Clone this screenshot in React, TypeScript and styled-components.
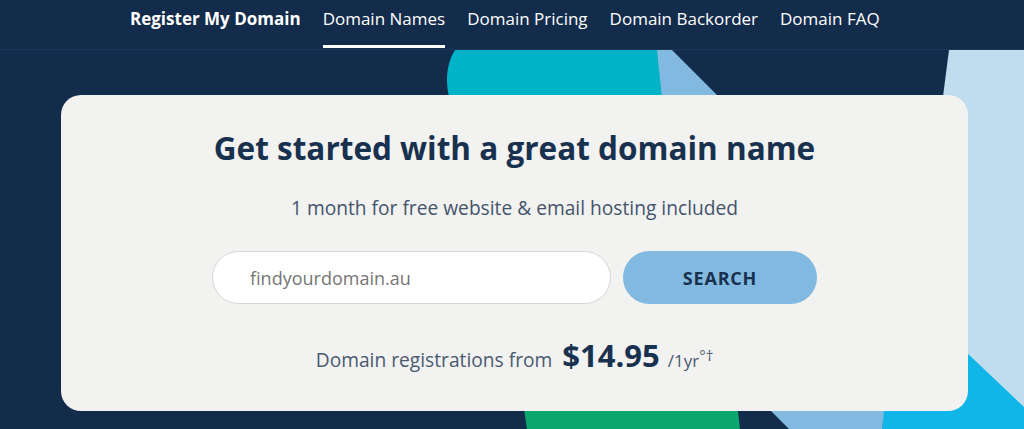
import React from "react";
import styled, { createGlobalStyle } from "styled-components";

const GlobalStyle = createGlobalStyle`
  html, body {
    margin: 0;
    padding: 0;
    background: #132c4b;
    font-family: "Open Sans", "Liberation Sans", sans-serif;
  }
  * { box-sizing: border-box; }
`;

const Page = styled.div`
  width: 1024px;
  height: 429px;
  overflow: hidden;
  background: #132c4b;
`;

const NavBar = styled.nav`
  height: 50px;
  display: flex;
  align-items: stretch;
  gap: 22px;
  padding-left: 130px;
  border-bottom: 1px solid #1c3657;
`;

const NavItem = styled.a<{ $active?: boolean; $bold?: boolean }>`
  display: flex;
  align-items: center;
  padding-bottom: 9px;
  color: #ffffff;
  font-size: 17px;
  font-weight: ${(p) => (p.$bold ? 700 : 400)};
  text-decoration: none;
  white-space: nowrap;
  border-bottom: 3px solid ${(p) => (p.$active ? "#ffffff" : "transparent")};
  margin-bottom: 1px;
`;

const Hero = styled.section`
  position: relative;
  height: 379px;
  padding-top: 45px;
`;

const Shapes = styled.svg`
  position: absolute;
  inset: 0;
  width: 100%;
  height: 100%;
`;

const Card = styled.div`
  position: relative;
  margin-left: 61px;
  width: 907px;
  height: 316px;
  border-radius: 20px;
  background: #f2f2f1;
  display: flex;
  flex-direction: column;
  align-items: center;
  padding-top: 33px;
`;

const Title = styled.h1`
  margin: 0;
  font-size: 31.5px;
  line-height: 40px;
  font-weight: 700;
  color: #18314f;
`;

const Subtitle = styled.p`
  margin: 28px 0 0;
  font-size: 19.2px;
  line-height: 24px;
  color: #44546a;
`;

const SearchRow = styled.form`
  display: flex;
  gap: 12px;
  margin-top: 31px;
`;

const DomainInput = styled.input`
  width: 399px;
  height: 53px;
  border-radius: 27px;
  border: 1px solid #d6d6d6;
  background: #ffffff;
  padding: 0 0 0 37px;
  font-family: inherit;
  font-size: 18px;
  color: #333;
  outline: none;
  &::placeholder { color: #767676; }
`;

const SearchButton = styled.button`
  width: 194px;
  height: 53px;
  border: none;
  border-radius: 27px;
  background: #82b9e0;
  color: #18314f;
  font-family: inherit;
  font-size: 18px;
  font-weight: 700;
  letter-spacing: 0.8px;
  cursor: pointer;
`;

const PriceRow = styled.div`
  display: flex;
  align-items: baseline;
  margin-top: 30px;
  color: #4a5a70;
  font-size: 19.2px;
`;

const Price = styled.span`
  margin: 0 8px 0 10px;
  font-size: 31px;
  font-weight: 700;
  color: #18314f;
`;

const Term = styled.span`
  font-size: 17px;
  sup {
    font-size: 15px;
    line-height: 0;
    vertical-align: 6px;
  }
`;

const navLinks = [
  { label: "Register My Domain", bold: true },
  { label: "Domain Names", active: true },
  { label: "Domain Pricing" },
  { label: "Domain Backorder" },
  { label: "Domain FAQ" },
];

export default function App() {
  return (
    <Page>
      <GlobalStyle />
      <NavBar>
        {navLinks.map((l) => (
          <NavItem key={l.label} href="#" $bold={l.bold} $active={l.active}>
            {l.label}
          </NavItem>
        ))}
      </NavBar>
      <Hero>
        <Shapes viewBox="0 50 1024 379" preserveAspectRatio="none">
          <path d="M455 50 C446 64 445 84 450 100 L470 200 L690 200 L658 50 Z" fill="#00b3c9" />
          <path d="M657 50 L672 50 L740 118 L664 118 Z" fill="#82b9e0" />
          <path d="M949 50 L1024 50 L1024 429 L900 429 Z" fill="#c0ddf0" />
          <path d="M890 280 L1024 407 L1024 429 L882 429 Z" fill="#10b6e8" />
          <path d="M522 395 L736 395 L740 429 L527 429 Z" fill="#0aa86e" />
          <path d="M755 395 L886 395 L882 429 L789 429 Z" fill="#82b9e0" />
        </Shapes>
        <Card>
          <Title>Get started with a great domain name</Title>
          <Subtitle>1 month for free website &amp; email hosting included</Subtitle>
          <SearchRow onSubmit={(e) => e.preventDefault()}>
            <DomainInput placeholder="findyourdomain.au" />
            <SearchButton type="submit">SEARCH</SearchButton>
          </SearchRow>
          <PriceRow>
            Domain registrations from
            <Price>$14.95</Price>
            <Term>
              /1yr<sup>°†</sup>
            </Term>
          </PriceRow>
        </Card>
      </Hero>
    </Page>
  );
}
